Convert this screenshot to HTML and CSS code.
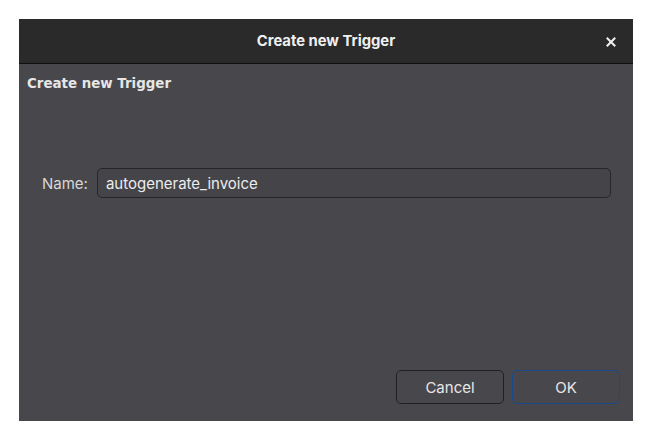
FILE: index.html
```
<!DOCTYPE html>
<html>
<head>
<meta charset="utf-8">
<link rel="stylesheet" href="styles.css">
</head>
<body>
<div class="dialog">
  <div class="titlebar">
    <span class="title">Create new Trigger</span>
    <span class="close" aria-label="Close">
      <svg width="10" height="10" viewBox="0 0 10 10"><path d="M1.5 1.5 L8.5 8.5 M8.5 1.5 L1.5 8.5" stroke="#f2f2f2" stroke-width="2" stroke-linecap="square"/></svg>
    </span>
  </div>
  <div class="content">
    <div class="heading">Create new Trigger</div>
    <div class="row">
      <label class="label">Name:</label>
      <div class="input">autogenerate_invoice</div>
    </div>
    <div class="footer">
      <button class="btn">Cancel</button>
      <button class="btn btn-default">OK</button>
    </div>
  </div>
</div>
</body>
</html>
```
FILE: styles.css
```
html, body {
  margin: 0;
  padding: 0;
  background: #ffffff;
}
body {
  padding: 19px 0 0 19px;
  font-family: Inter, "Noto Sans", sans-serif;
}
.dialog {
  width: 614px;
  height: 402px;
  background: #48474c;
  display: flex;
  flex-direction: column;
  box-sizing: border-box;
}
.titlebar {
  height: 44px;
  flex: none;
  background: #2a2a2a;
  border-bottom: 1px solid #0f0f0f;
  display: flex;
  align-items: center;
  justify-content: center;
  position: relative;
}
.title {
  color: #f0f0f0;
  font-weight: 700;
  font-size: 14.8px;
  letter-spacing: 0;
}
.close {
  position: absolute;
  right: 17px;
  top: 18px;
  width: 10px;
  height: 10px;
  display: flex;
}
.content {
  flex: 1;
  display: flex;
  flex-direction: column;
}
.heading {
  font-family: "DejaVu Sans", sans-serif;
  font-weight: 700;
  font-size: 13.4px;
  line-height: 18px;
  color: #e6e6e6;
  padding: 11px 0 0 8px;
}
.row {
  display: flex;
  align-items: center;
  margin: 75px 22px 0 23px;
  gap: 9px;
}
.label {
  color: #d8d8d8;
  font-size: 15px;
}
.input {
  flex: 1;
  height: 30px;
  box-sizing: border-box;
  border: 1px solid #26262a;
  border-radius: 5px;
  background: #454449;
  color: #ececec;
  font-size: 15px;
  padding: 0 8px;
  display: flex;
  align-items: center;
}
.footer {
  margin-top: auto;
  display: flex;
  justify-content: flex-end;
  gap: 8px;
  padding: 0 13px 17px 0;
}
.btn {
  width: 108px;
  height: 34px;
  box-sizing: border-box;
  border: 1px solid #212124;
  border-radius: 5px;
  background: #48474c;
  color: #e6e6e6;
  font-family: Inter, "Noto Sans", sans-serif;
  font-size: 15px;
  padding: 0;
}
.btn-default {
  border-color: #1b4a8a;
}
```
